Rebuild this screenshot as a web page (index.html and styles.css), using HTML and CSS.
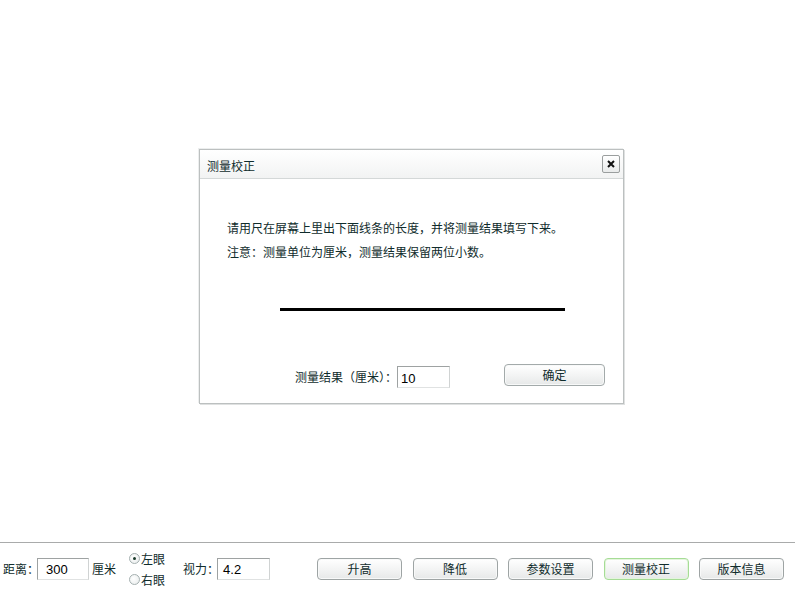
FILE: index.html
```html
<!DOCTYPE html>
<html lang="zh-CN">
<head>
<meta charset="utf-8">
<title>视力测试</title>
<link rel="stylesheet" href="styles.css">
</head>
<body>
<div class="page">
  <div class="stage">
    <div class="dialog">
      <div class="dialog-title">
        <span class="title-text">测量校正</span>
        <span class="close-btn">
          <svg width="8" height="8" viewBox="0 0 8 8"><path d="M1 1 L7 7 M7 1 L1 7" stroke="#111" stroke-width="2"/></svg>
        </span>
      </div>
      <div class="dialog-body">
        <p class="line">请用尺在屏幕上里出下面线条的长度，并将测量结果填写下来。</p>
        <p class="line">注意：测量单位为厘米，测量结果保留两位小数。</p>
        <div class="ruler-line"></div>
        <div class="result-row">
          <span class="result-label">测量结果（厘米）：</span>
          <span class="field field-result">10</span>
          <span class="btn btn-ok">确定</span>
        </div>
      </div>
    </div>
  </div>
  <div class="toolbar">
    <span class="tb-label">距离：</span>
    <span class="field field-dist">300</span>
    <span class="tb-unit">厘米</span>
    <div class="radios">
      <div class="radio-row"><span class="radio checked"></span><span>左眼</span></div>
      <div class="radio-row"><span class="radio"></span><span>右眼</span></div>
    </div>
    <span class="tb-label tb-vision">视力：</span>
    <span class="field field-vision">4.2</span>
    <div class="buttons">
      <span class="btn">升高</span>
      <span class="btn">降低</span>
      <span class="btn">参数设置</span>
      <span class="btn btn-active">测量校正</span>
      <span class="btn">版本信息</span>
    </div>
  </div>
</div>
</body>
</html>
```

FILE: styles.css
```css
* { box-sizing: border-box; }
html, body { margin: 0; padding: 0; background: #fff; }
body {
  font-family: "Noto Sans CJK SC", "Liberation Sans", sans-serif;
  font-size: 12px;
  color: #102c2c;
}
.page {
  width: 795px;
  height: 595px;
  display: flex;
  flex-direction: column;
}
.stage {
  flex: 1;
  padding: 149px 0 0 199px;
}
.dialog {
  width: 425px;
  height: 255px;
  border: 1px solid #bcc0c0;
  box-shadow: 1px 1px 0 #dfe1e1, -1px -1px 0 #eceeee;
  background: #fff;
  display: flex;
  flex-direction: column;
}
.dialog-title {
  height: 29px;
  border-bottom: 1px solid #d4d8d8;
  background: linear-gradient(#ffffff, #f2f3f3);
  display: flex;
  align-items: center;
  justify-content: space-between;
  padding: 0 3px 0 7px;
}
.title-text {
  line-height: 12px;
  padding-top: 3px;
}
.close-btn {
  width: 18px;
  height: 18px;
  border: 1px solid #9a9e9e;
  border-radius: 2px;
  background: linear-gradient(#ffffff, #e9ebeb);
  display: flex;
  align-items: center;
  justify-content: center;
}
.dialog-body {
  flex: 1;
  padding: 37px 0 0 27px;
}
.line {
  margin: 0;
  line-height: 24px;
  white-space: nowrap;
}
.ruler-line {
  margin: 44px 0 0 53px;
  width: 285px;
  height: 3px;
  background: #000;
}
.result-row {
  margin: 53px 0 0 68px;
  height: 24px;
  display: flex;
  align-items: center;
}
.result-label {
  line-height: 12px;
  margin-top: 2px;
}
.field {
  height: 22px;
  border: 1px solid;
  border-color: #9ea2a2 #d0d3d3 #e0e2e2 #9ea2a2;
  background: #fff;
  font-family: "Liberation Sans", Arial, sans-serif;
  font-size: 13px;
  color: #000;
  display: flex;
  align-items: center;
  line-height: 1;
}
.field-result {
  width: 53px;
  padding: 3px 0 0 3px;
  align-self: flex-end;
}
.btn {
  width: 101px;
  height: 22px;
  border: 1px solid #a3aaaa;
  border-radius: 4px;
  background: linear-gradient(#ffffff, #f1f2f2 60%, #e6e8e8);
  box-shadow: inset 0 0 0 1px #f8f9f9;
  display: flex;
  align-items: center;
  justify-content: center;
  line-height: 12px;
  color: #102c2c;
}
.btn-ok {
  margin-left: 54px;
  align-self: flex-start;
}
.toolbar {
  height: 53px;
  border-top: 1px solid #a9abab;
  display: flex;
  align-items: center;
  padding-left: 3px;
}
.tb-label { line-height: 12px; }
.field-dist {
  width: 52px;
  margin-left: -2px;
  padding-left: 8px;
}
.tb-unit {
  margin-left: 3px;
  line-height: 12px;
}
.radios {
  margin-left: 13px;
  display: flex;
  flex-direction: column;
}
.radio-row {
  height: 21px;
  display: flex;
  align-items: center;
  line-height: 12px;
}
.radio {
  width: 11px;
  height: 11px;
  border-radius: 50%;
  border: 1px solid #a5b0b0;
  background: radial-gradient(circle at 40% 40%, #ffffff, #e6eaea);
  margin-right: 1px;
  display: flex;
  align-items: center;
  justify-content: center;
}
.radio.checked::after {
  content: "";
  width: 3px;
  height: 3px;
  border-radius: 50%;
  background: #1a3a2a;
}
.tb-vision { margin-left: 18px; }
.field-vision {
  width: 53px;
  margin-left: -2px;
  padding-left: 5px;
}
.buttons {
  margin-left: 47px;
  display: flex;
  gap: 10.5px;
}
.buttons .btn {
  width: 85px;
  border-color: #9ea4a4;
}
.buttons .btn-active {
  border-color: #a6dc96;
  box-shadow: inset 0 0 0 1px #e4f5dd;
}
```
